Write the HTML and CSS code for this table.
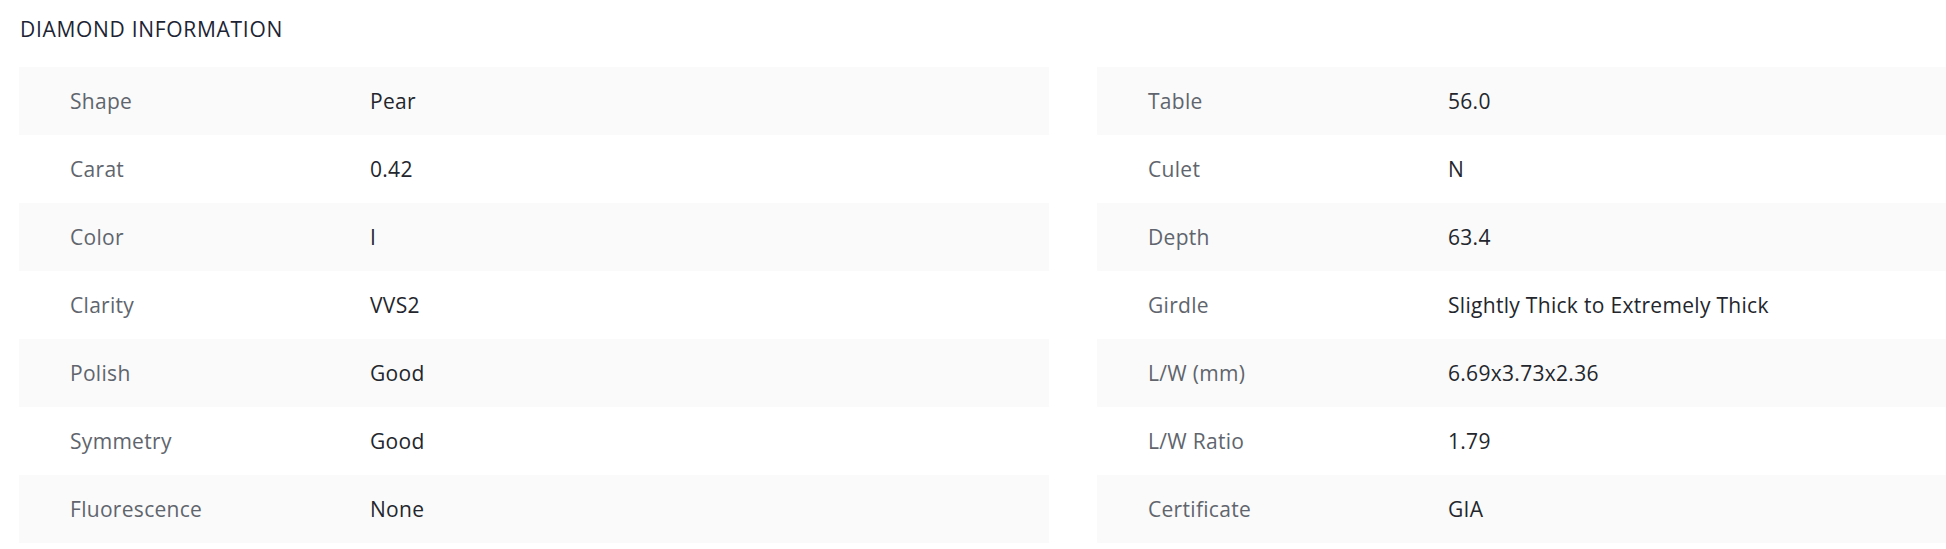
FILE: index.html
```html
<!DOCTYPE html>
<html lang="en">
<head>
<meta charset="utf-8">
<title>Diamond Information</title>
<link rel="stylesheet" href="styles.css">
</head>
<body>
<section class="diamond-info">
  <h2 class="section-title">DIAMOND INFORMATION</h2>
  <div class="spec-columns">
    <div class="spec-table">
      <div class="spec-row"><span class="spec-label">Shape</span><span class="spec-value">Pear</span></div>
      <div class="spec-row"><span class="spec-label">Carat</span><span class="spec-value">0.42</span></div>
      <div class="spec-row"><span class="spec-label">Color</span><span class="spec-value">I</span></div>
      <div class="spec-row"><span class="spec-label">Clarity</span><span class="spec-value">VVS2</span></div>
      <div class="spec-row"><span class="spec-label">Polish</span><span class="spec-value">Good</span></div>
      <div class="spec-row"><span class="spec-label">Symmetry</span><span class="spec-value">Good</span></div>
      <div class="spec-row"><span class="spec-label">Fluorescence</span><span class="spec-value">None</span></div>
    </div>
    <div class="spec-table">
      <div class="spec-row"><span class="spec-label">Table</span><span class="spec-value">56.0</span></div>
      <div class="spec-row"><span class="spec-label">Culet</span><span class="spec-value">N</span></div>
      <div class="spec-row"><span class="spec-label">Depth</span><span class="spec-value">63.4</span></div>
      <div class="spec-row"><span class="spec-label">Girdle</span><span class="spec-value">Slightly Thick to Extremely Thick</span></div>
      <div class="spec-row"><span class="spec-label">L/W (mm)</span><span class="spec-value">6.69x3.73x2.36</span></div>
      <div class="spec-row"><span class="spec-label">L/W Ratio</span><span class="spec-value">1.79</span></div>
      <div class="spec-row"><span class="spec-label">Certificate</span><span class="spec-value">GIA</span></div>
    </div>
  </div>
</section>
</body>
</html>
```
FILE: styles.css
```css
html, body {
  margin: 0;
  padding: 0;
  background: #ffffff;
  overflow: hidden;
}

body {
  font-family: "Open Sans", "Noto Sans", sans-serif;
  font-size: 21px;
  letter-spacing: 0.3px;
}

.diamond-info {
  padding: 14px 0 0 19px;
}

.section-title {
  margin: 0 0 23px 1px;
  font-size: 21px;
  font-weight: 400;
  line-height: 30px;
  letter-spacing: 0.7px;
  color: #1c2434;
}

.spec-columns {
  display: grid;
  grid-template-columns: 1030px minmax(0, 1fr);
  column-gap: 48px;
}

.spec-table {
  min-width: 0;
}

.spec-row {
  display: grid;
  grid-template-columns: 300px minmax(0, 1fr);
  height: 68px;
  align-items: center;
  line-height: 30px;
  padding-left: 51px;
}

.spec-row:nth-child(odd) {
  background: #fafafa;
}

.spec-label {
  color: #60656d;
}

.spec-value {
  color: #23262c;
  white-space: nowrap;
}
```
